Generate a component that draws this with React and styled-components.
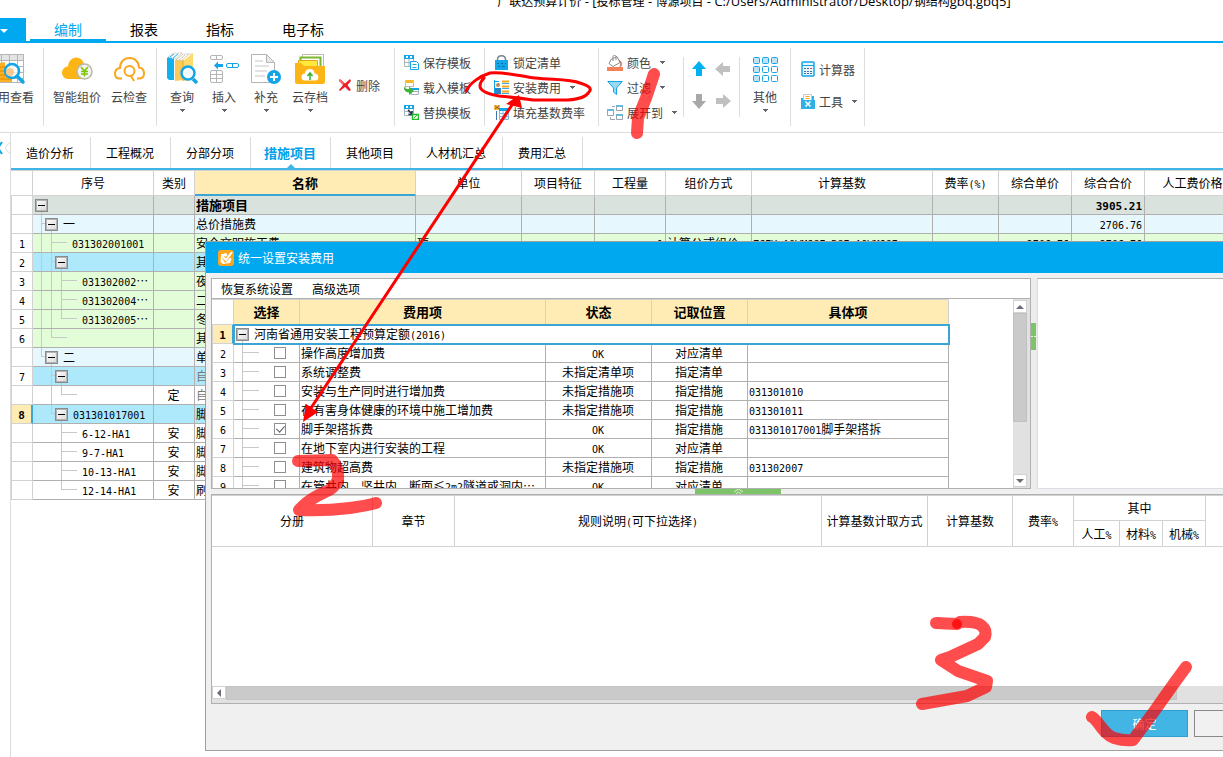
import React, { Component } from "react";
import styled, { createGlobalStyle, css } from "styled-components";

const GlobalStyle = createGlobalStyle`
  * {
    box-sizing: border-box;
  }

  body {
    margin: 0;
    background: #fff;
    color: #000;
    font-family: "Noto Sans CJK SC", sans-serif;
    font-size: 12px;
  }

  button {
    margin: 0;
    padding: 0;
    border: 0;
    background: none;
    color: inherit;
    font: inherit;
  }

  svg {
    display: block;
    flex: none;
  }
`;

const Window = styled.div`
  position: relative;
  display: flex;
  flex-direction: column;
  min-height: 100vh;
  overflow: hidden;
`;

const TitleBar = styled.div`
  height: 18px;
  padding-left: 285px;
  line-height: 2px;
  text-align: center;
  white-space: nowrap;
`;

const TitleLatin = styled.span`
  font-family: "Open Sans", sans-serif;
  font-size: 13px;
`;

const MenuTabs = styled.div`
  display: flex;
  height: 25px;
  border-bottom: 2px solid #00a8f0;
`;

const AppButton = styled.button`
  width: 26px;
  height: 25px;
  margin-right: 4px;
  background: #00a8f0;
`;

const MenuTab = styled.button`
  height: 23px;
  padding: 0 24px;
  font-size: 14px;
  line-height: 20px;
  color: ${props => (props.$active ? "#00a8f0" : "#000")};
  border-bottom: 2px solid ${props => (props.$active ? "#00a8f0" : "transparent")};
`;

const Ribbon = styled.div`
  display: flex;
  height: 90px;
  border-bottom: 1px solid #dcdcdc;
  color: #444;
  white-space: nowrap;
`;

const Divider = styled.div`
  flex: none;
  width: 1px;
  margin: ${props => (props.$short ? "14px 0 15px" : "5px 0 6px")};
  background: #dedede;
`;

const Group = styled.div`
  display: flex;
  flex: none;
  gap: 10px;
  padding: 0 9px;
`;

const EdgeGroup = styled(Group)`
  width: 43px;
  justify-content: flex-end;
`;

const BigButton = styled.button`
  display: flex;
  flex: none;
  flex-direction: column;
  align-items: center;
  min-width: 32px;
  padding-top: 9px;
  line-height: 22px;

  span + svg {
    margin-top: 1px;
  }
`;

const SmallColumn = styled.div`
  display: flex;
  flex: none;
  flex-direction: column;
  padding: 7px 13px 0 9px;
`;

const ViewColumn = styled(SmallColumn)`
  padding: 7px 6px 0 8px;
`;

const ToolColumn = styled(SmallColumn)`
  padding: 10px 7px 0 10px;
`;

const SmallButton = styled.button`
  display: flex;
  align-items: center;
  gap: 4px;
  height: ${props => (props.$tall ? "32px" : "25px")};

  svg + span + svg {
    margin-left: 5px;
  }
`;

const DeleteButton = styled(SmallButton)`
  height: 84px;
  padding-right: 5px;
`;

const Arrows = styled.div`
  display: grid;
  grid-template-columns: 24px 24px;
  grid-template-rows: 32px 32px;
  padding: 10px 0 0 7px;

  button {
    display: flex;
    align-items: center;
  }
`;

const Workspace = styled.div`
  display: flex;
  flex: 1;
`;

const SideStrip = styled.div`
  flex: none;
  width: 11px;
  padding-top: 7px;
  border-right: 1px solid #dcdcdc;
`;

const Sheet = styled.div`
  flex: 1;
  min-width: 0;
  overflow: hidden;
`;

const SheetTabs = styled.div`
  display: flex;
  height: 37px;
  padding-top: 4px;
  border-bottom: 2px solid #40b4e5;
`;

const SheetTab = styled.button`
  position: relative;
  flex: none;
  padding: 0 16px 0 15px;
  border-right: 1px solid #dcdcdc;

  ${props =>
    props.$active &&
    css`
      padding: 0 14px 0 13px;
      color: #00a0e9;
      font-size: 13px;
      font-weight: bold;

      &::after {
        content: "";
        position: absolute;
        bottom: 0;
        left: 50%;
        margin-left: -4px;
        border: 4px solid transparent;
        border-top: 0;
        border-bottom-color: #40b4e5;
      }
    `};
`;

const Latin = styled.span`
  font-family: "DejaVu Sans Mono", monospace;
  font-size: ${props => (props.$large ? "11px" : "10px")};
  line-height: 1;
`;

const Table = styled.table`
  width: ${props => props.$width || "100%"};
  min-width: ${props => props.$min || "0"};
  table-layout: fixed;
  border-collapse: separate;
  border-spacing: 0;
  border-top: 1px solid #d2d2d2;
`;

const Head = styled.th`
  height: ${props => props.$height || "25px"};
  padding: 0;
  overflow: hidden;
  border-right: 1px solid #d2d2d2;
  border-bottom: 1px solid #d2d2d2;
  background: ${props => (props.$yellow ? "#ffebb4" : "#fff")};
  font-size: ${props => (props.$bold ? "13px" : "12px")};
  font-weight: ${props => (props.$bold ? "bold" : "normal")};
  line-height: 18px;
  white-space: nowrap;

  ${props => props.$current && "border-bottom: 2px solid #3ba6d6;"};
`;

const ROW_COLORS = {
  total: "#dae2dd",
  section: "#e6f7fd",
  item: "#e3fdd9",
  group: "#aee9fb",
  plain: "#fff"
};

const Cell = styled.td`
  height: 19px;
  padding: 0 2px 0 1px;
  overflow: hidden;
  border-right: 1px solid #b0b0b0;
  border-bottom: 1px solid #b0b0b0;
  background: ${props => ROW_COLORS[props.$kind || "plain"]};
  color: ${props => (props.$muted ? "#777" : "#000")};
  font-size: ${props => (props.$bold ? "13px" : "12px")};
  font-weight: ${props => (props.$bold ? "bold" : "normal")};
  line-height: 18px;
  text-align: ${props => props.$align || "left"};
  white-space: nowrap;
`;

const NumberCell = styled(Cell)`
  padding: 0;
  border-color: #d2d2d2;
  border-left: 1px solid #d2d2d2;
  text-align: center;
  background: ${props => (props.$current ? "#ffebb4" : "#fff")};
  font-weight: ${props => (props.$current ? "bold" : "normal")};

  ${props => props.$current && "border-right: 2px solid #3ba6d6;"};
`;

const OutlinedCell = styled(Cell)`
  outline: 2px solid #3ba6d6;
  outline-offset: -1px;
`;

const Tree = styled.div`
  display: flex;
  align-items: center;
  height: 18px;
  margin-left: -1px;
`;

const TreeText = styled.span`
  padding-left: 5px;
`;

const Toggle = styled.button`
  position: relative;
  flex: none;
  width: 13px;
  height: 13px;
  border: 1px solid #8a8a8a;
  box-shadow: inset 0 0 0 1px #b4b4b4;
  background: linear-gradient(135deg, #fff, #d8d8d8);

  &::before {
    content: "";
    position: absolute;
    top: 5px;
    left: 2px;
    width: 7px;
    height: 1px;
    background: #000;
  }

  &::after {
    content: "";
    position: absolute;
    top: 12px;
    left: 5px;
    width: 1px;
    height: 3px;
    background: #c8c8c8;
  }
`;

const Check = styled.input`
  flex: none;
  appearance: none;
  width: 12px;
  height: 12px;
  margin: 0;
  border: 1px solid #8e8e8e;
  background: #fff;

  &:checked::after {
    content: "";
    display: block;
    width: 4px;
    height: 7px;
    margin: 0 0 0 3px;
    border: solid #555b66;
    border-width: 0 1px 1px 0;
    transform: rotate(42deg);
  }
`;

const Dialog = styled.section`
  position: absolute;
  top: 241px;
  left: 205px;
  right: -64px;
  border: 1px solid #a0a0a0;
  background: #f0f0f0;
`;

const DialogTitle = styled.header`
  display: flex;
  align-items: center;
  gap: 4px;
  height: 31px;
  padding-left: 12px;
  background: #00a8f0;
  color: #fff;
`;

const DialogBody = styled.div`
  padding: 5px 5px 0;
`;

const Upper = styled.div`
  display: flex;
  height: 211px;
`;

const FeePanel = styled.div`
  display: flex;
  flex: 0 0 820px;
  flex-direction: column;
  border: 1px solid #b0b0b0;
  background: #fff;
`;

const FeeMenu = styled.div`
  display: flex;
  flex: none;
  gap: 19px;
  height: 20px;
  padding-left: 9px;
  border-bottom: 1px solid #b0b0b0;
`;

const FeeScroll = styled.div`
  display: flex;
  justify-content: space-between;
  flex: 1;
  overflow: hidden;
`;

const PreviewPanel = styled.div`
  flex: 1;
  border: 1px solid #b0b0b0;
  border-left-color: #dcdce4;
  border-bottom-color: #dcdce4;
  background: #fff;
`;

const SideSplitter = styled.div`
  flex: none;
  width: 6px;
  padding-top: 45px;
  background: #ececec;
`;

const SideGrip = styled.button`
  display: flex;
  align-items: center;
  width: 5px;
  height: 27px;
  background: #7dc468;
`;

const Splitter = styled.div`
  height: 5px;
  padding-left: 484px;
`;

const Grip = styled.button`
  display: flex;
  justify-content: center;
  width: 86px;
  height: 5px;
  background: #7dc468;
`;

const VScroll = styled.div`
  flex: none;
  width: 17px;
  padding: 1px 3px 1px 0;
  display: flex;
  flex-direction: column;
  background: #e1e1e1;
`;

const ScrollButton = styled.button`
  display: flex;
  flex: none;
  align-items: center;
  justify-content: center;
  width: 14px;
  height: 13px;
  border: 1px solid #d2d2d2;
  background: #fff;
`;

const VThumb = styled.div`
  height: 109px;
  margin-bottom: auto;
  border: 1px solid #c0c0c0;
  background: #cacaca;
`;

const RulePanel = styled.div`
  display: flex;
  flex-direction: column;
  height: 210px;
  border: 1px solid #b0b0b0;
  background: #fff;
`;

const HScroll = styled.div`
  display: flex;
  height: 17px;
  margin-top: auto;
  padding-bottom: 3px;
  background: #e1e1e1;
`;

const HThumb = styled.div`
  width: 89%;
  border: 1px solid #c4c4c4;
  background: #cacaca;
`;

const Footer = styled.footer`
  display: flex;
  justify-content: flex-end;
  gap: 6px;
  height: 46px;
  padding: 6px 5px 0;
`;

const DialogButton = styled.button`
  width: 87px;
  height: 27px;
  border: 1px solid ${props => (props.$primary ? "#2f9fd0" : "#8a8a8a")};
  background: ${props => (props.$primary ? "#43b5e4" : "#f1f1f1")};
  color: ${props => (props.$primary ? "#fff" : "#000")};
`;

const Marks = styled.svg`
  position: absolute;
  top: 0;
  left: 0;
  pointer-events: none;
`;

// Latin runs are set in a half-width face next to the full-width characters
const Mixed = ({ children, large, as: Run = Latin }) =>
  String(children || "")
    .split(/([\x20-\x7e]+)/)
    .map((part, i) =>
      i % 2 ? (
        <Run key={i} $large={large}>
          {part}
        </Run>
      ) : (
        part
      )
    );

const Caret = ({ color = "#5f6470" }) => (
  <svg width="5" height="3" viewBox="0 0 5 3">
    <path d="M0 0h5v1H4v1H3v1H2V2H1V1H0z" fill={color} />
  </svg>
);

const Svg = ({ w = 32, h = 34, children }) => (
  <svg width={w} height={h} viewBox={`0 0 ${w} ${h}`} fill="none">
    {children}
  </svg>
);

const CostViewIcon = () => (
  <Svg>
    <path d="M0 2.500h29.500v28H0z" fill="#fff" stroke="#b5b5b5" />
    <path d="M0 3h29v5H0z" fill="#e4e4e4" />
    <path d="M0 8.500h29M0 14.500h29M0 20.500h29M0 26.500h29M7.500 3v27M15.500 3v27M23.500 3v27" stroke="#b5b5b5" />
    <path d="M0 12l11-2v20H0zM11 18h7v12h-7z" fill="#fdb022" />
    <path d="M0 15h11M0 19h11M0 23h18M0 27h18" stroke="#e08a00" />
    <circle cx="18" cy="19" r="7" fill="#fff" fillOpacity=".7" stroke="#12a5e8" strokeWidth="2.500" />
    <circle cx="16" cy="20" r="4" fill="#fbc98c" />
    <path d="M23 24l6 6" stroke="#12a5e8" strokeWidth="3.500" strokeLinecap="round" />
  </Svg>
);

const CloudPriceIcon = () => (
  <Svg>
    <path d="M7 27a6 6 0 0 1-6-6c0-4 3-6.500 6-6.500C7.500 9 11 5.500 15 5.500c5 0 8 4 8.500 8.500V27z" fill="#fdb515" />
    <circle cx="23.500" cy="19.500" r="7.500" fill="#f4f4f0" stroke="#b8b8a8" strokeWidth="1.500" />
    <path d="M20 15l3.500 4 3.500-4M20 19.500h7M20 22h7M23.500 19v5.500" stroke="#7ac800" strokeWidth="1.500" />
  </Svg>
);

const CloudCheckIcon = () => (
  <Svg>
    <path d="M9 26.500H6.500C3 26.500 2 24 2 21.500c0-3 2-5 5-5.500 0-6 4-10 9.500-10S26 10 26 15.500c3 .5 5 3 5 6s-2 5-5 5h-2" stroke="#fba61c" strokeWidth="2" />
    <circle cx="16.500" cy="19" r="5" stroke="#fba61c" strokeWidth="2" />
    <path d="M18 24l3 5" stroke="#fba61c" strokeWidth="2" />
  </Svg>
);

const BooksIcon = () => (
  <Svg>
    <path d="M1 6l7-5h6L8 7v21H3l-2-2z" fill="#12b0ec" />
    <path d="M2 5l5-4h9l-7 6z" fill="#fff" stroke="#bbb" strokeWidth=".6" />
    <path d="M4 5l4-3M7 6l5-4" stroke="#12b0ec" />
    <path d="M8 7h2v21H8z" fill="#fff" />
    <path d="M9 8l8-6v26l-8 1z" fill="#fdc95a" />
    <path d="M10 8l7-6h10l-9 7z" fill="#fff" stroke="#bbb" strokeWidth=".6" />
    <path d="M13 8l6-5M16 8l7-6" stroke="#d8c9a0" />
    <path d="M17 9l10-8v27l-10 1z" fill="#fddb6c" />
    <path d="M17 8v21" stroke="#eea91f" />
    <circle cx="22" cy="21" r="6.500" fill="#f4fbff" stroke="#12a5e8" strokeWidth="2.500" />
    <path d="M27 27l4 4" stroke="#12a5e8" strokeWidth="3.500" />
  </Svg>
);

const InsertIcon = () => (
  <Svg>
    <rect x="2.500" y="3.500" width="12" height="4" rx="1.500" stroke="#b5b5b5" />
    <path d="M8.500 3v5" stroke="#b5b5b5" />
    <path d="M6 13.500l4-4V12h5v3h-5v2.500z" fill="#12a5e8" />
    <rect x="18.500" y="11.500" width="12" height="4" rx="1.500" stroke="#12a5e8" />
    <path d="M24.500 11v5" stroke="#12a5e8" />
    <rect x="2.500" y="18.500" width="12" height="12" rx="1.500" stroke="#b5b5b5" />
    <path d="M8.500 18v13M2 22.500h12M2 26.500h12" stroke="#b5b5b5" />
  </Svg>
);

const SupplementIcon = () => (
  <Svg>
    <path d="M1.500 2.500h15l8 8v20h-23z" fill="#fff" stroke="#b5b5b5" />
    <path d="M16.500 2.500v8h8z" fill="#e8e8e8" stroke="#b5b5b5" />
    <path d="M5 9h8M5 14h14M5 19h12M5 24h10" stroke="#e2e2e2" strokeWidth="2" />
    <circle cx="24" cy="25" r="7" fill="#12a5e8" />
    <path d="M24 21v8M20 25h8" stroke="#fff" strokeWidth="2" />
  </Svg>
);

const ArchiveIcon = () => (
  <Svg>
    <path d="M8.500 2.500h21v14h-21z" fill="#fff" stroke="#c5bba5" />
    <path d="M6.500 5.500h20v12h-20z" fill="#fff" stroke="#7cb82f" strokeWidth="2" />
    <path d="M4.500 8.500h19v10h-19z" fill="#ffe93c" stroke="#e8a21c" />
    <path d="M1 11h6l3 3h21v16a2 2 0 0 1-2 2H3a2 2 0 0 1-2-2z" fill="#fdb515" />
    <path d="M11 28.500a3.500 3.500 0 0 1 0-7c0-3 2-4.500 5-4.500s4.500 2 4.500 4.500c5 0 5 7 1 7z" fill="#fff" />
    <path d="M16 28v-6M13.500 24l2.500-3 2.500 3" stroke="#3bb32d" strokeWidth="1.500" />
  </Svg>
);

const OthersIcon = () => (
  <Svg>
    {[5, 14, 23].map((y, r) =>
      [4, 13, 22].map((x, c) => (
        <rect
          key={x}
          x={x + 0.5}
          y={y + 0.5}
          width="6"
          height="6"
          rx="1"
          fill={r === 0 || c === 0 ? "#bfe2f4" : "#fff"}
          stroke="#12a5e8"
        />
      ))
    )}
  </Svg>
);

const DeleteIcon = () => (
  <Svg w={14} h={14}>
    <path d="M2 1l5 4.500L12 1l1 2-3.500 4L13 12l-2 1-4-4-5 4-1-1 4-5-4-4.500z" fill="#e8202a" />
    <path d="M2 1l4 4-1 2-4-4z" fill="#f76a6a" />
  </Svg>
);

const SaveTemplateIcon = () => (
  <Svg w={15} h={15}>
    <path d="M.5 1.500h9v10h-9zM.5 7.500h9M5 1v11" fill="#fff" stroke="#a9b4ba" />
    <path d="M0 0h10v4H0z" fill="#12a5e8" />
    <path d="M2 1h2v2H2zM6 1h2v2H6z" fill="#fff" />
    <path d="M6.500 6.500h6l2 2v6h-8z" fill="#fff" stroke="#12a5e8" />
    <path d="M8.500 9.500h4M8.500 12.500h4" stroke="#12a5e8" />
  </Svg>
);

const LoadTemplateIcon = () => (
  <Svg w={15} h={15}>
    <rect x="1" y="0" width="9" height="3" rx="1" fill="#f8b830" />
    <path d="M1.500 3v5M9.500 3v4M1 6.500h9" stroke="#bbb" />
    <path d="M7 8.500h7.500v6H7zM7 11.500h7" fill="#fff" stroke="#a9b4ba" />
    <path d="M7 8h8v2H7z" fill="#12a5e8" />
    <path d="M0 6c1 3 3 3 5 3V6.500l5 4.500-5 4v-2.500C2 12.500-1 10 0 6z" fill="#3eb23a" />
  </Svg>
);

const ReplaceTemplateIcon = () => (
  <Svg w={15} h={15}>
    <path d="M.5 1.500h9v9h-9zM.5 6.500h9M5 1v10" fill="#fff" stroke="#a9b4ba" />
    <path d="M0 0h10v4H0z" fill="#12a5e8" />
    <path d="M2 1h2v2H2zM6 1h2v2H6z" fill="#fff" />
    <path d="M4 5l4 4M8 6v3.500H4.500" stroke="#17344c" strokeWidth="1.500" />
    <path d="M8.500 9.500h6v5h-6z" fill="#fff" stroke="#21bb29" strokeWidth="1.500" />
    <path d="M10 13l3-3" stroke="#21bb29" />
  </Svg>
);

const LockIcon = () => (
  <Svg w={15} h={15}>
    <path d="M3.500 7V4.500C3.500-.5 11.500-.5 11.500 4.500V7" stroke="#7b838b" strokeWidth="1.500" />
    <rect x="1" y="5" width="13" height="10" fill="#12a5e8" />
    <path d="M3 8.500h2M7 8.500h2M11 8.500h1M4 11.500h2M8 11.500h3" stroke="#0b6ea8" />
  </Svg>
);

const InstallCostIcon = () => (
  <Svg w={15} h={15}>
    <path d="M.5 0v15M0 1.500h5M0 13.500h5" stroke="#12a5e8" />
    <circle cx="4" cy="5" r="2" fill="#b98a55" />
    <path d="M1 8h6v6H1z" fill="#2a83cc" />
    <path d="M8 1.500h7M8 6.500h7M8 11.500h7" stroke="#f5a623" strokeWidth="2" />
    <path d="M8 3.500h7M8 8.500h7M8 13.500h7" stroke="#45a8dc" />
  </Svg>
);

const FillRateIcon = () => (
  <Svg w={15} h={15}>
    <rect x="0" y="0" width="6" height="5" fill="#f5b94a" />
    <path d="M1 1l4 3M5 1L1 4" stroke="#8f5d10" />
    <path d="M2.500 6v9" stroke="#4575a8" />
    <path d="M5.500 3.500h9v11h-9zM5.500 8.500h9M5.500 11.500h9M9 5v10M12 5v10" fill="#fff" stroke="#7fb9de" />
    <path d="M5 3h10v3H5z" fill="#12a5e8" />
  </Svg>
);

const ColorIcon = () => (
  <Svg w={16} h={16}>
    <path d="M0 12h16v4H0z" fill="#f58158" />
    <path d="M4 4.500l6-3 3 6-7 4-4-3z" fill="#fff" stroke="#8b8b8b" />
    <path d="M6 6V1.500C6 0 9 0 9 1.500V5" stroke="#8b8b8b" />
    <path d="M12 5c2 1 2 4 1 7 2-1 2.500-5-1-7z" fill="#f58158" stroke="#a8674a" strokeWidth=".6" />
  </Svg>
);

const FilterIcon = () => (
  <Svg w={16} h={16}>
    <path d="M.8 1.500h14.400L9.500 8v6.500L6.500 12V8z" fill="#9bd8f4" stroke="#12a5e8" />
  </Svg>
);

const ExpandIcon = () => (
  <Svg w={16} h={16}>
    <path d="M.5 4.500h6v6h-6zM9.500.5h6v5h-6zM9.500 9.500h6v5h-6z" fill="#fff" stroke="#9aa3a8" />
    <path d="M0 4h7v2H0zM9 0h7v2H9zM9 9h7v2H9z" fill="#68b8dc" />
    <path d="M3.500 12v2.500H8M5 1.500h3" stroke="#9aa3a8" />
  </Svg>
);

const CalculatorIcon = () => (
  <Svg w={14} h={16}>
    <rect x="1" y="1" width="12" height="14" rx="1" fill="#eaf6fc" stroke="#12a5e8" strokeWidth="1.500" />
    <path d="M1 4.500h12" stroke="#12a5e8" />
    <path d="M3 7.500h5M3 10.500h8M3 12.500h8" stroke="#3a6fae" strokeDasharray="2 1" />
    <path d="M9 7.500h2" stroke="#f05a28" />
  </Svg>
);

const ToolIcon = () => (
  <Svg w={14} h={16}>
    <path d="M2.500 1.500h8v6h-8z" fill="#fff" stroke="#c9c9c9" />
    <path d="M4.500 3.500h4M4.500 5.500h4" stroke="#f5a623" />
    <path d="M0 5h2v2h9V3h2v4h1v9H0z" fill="#2fb1e8" />
    <path d="M4.500 8.500l5 5M9.500 8.500l-5 5" stroke="#fff" strokeWidth="1.500" />
  </Svg>
);

const ArrowIcon = ({ color, turn }) => (
  <svg width="16" height="16" viewBox="0 0 16 16">
    <path d="M8 0l7 8h-4v7H5V8H1z" fill={color} transform={`rotate(${turn} 8 8)`} />
  </svg>
);

const DialogIcon = () => (
  <Svg w={16} h={16}>
    <rect width="16" height="16" rx="3" fill="#fba61c" />
    <path d="M8 3L3 4.500 2.500 12 5 14l7-1 1.500-4" fill="#fff" />
    <path d="M5.500 7l2 3 6-7" stroke="#fba61c" strokeWidth="3.500" />
    <path d="M5 7l3 3 6-8" stroke="#fff" strokeWidth="2" />
  </Svg>
);

const ScrollArrow = ({ turn = 0 }) => (
  <svg width="8" height="8" viewBox="0 0 8 8">
    <path d="M4 2l4 4H0z" fill="#6a6c78" transform={`rotate(${turn} 4 4)`} />
  </svg>
);

// bars: full height lines, stop: line that ends at this row, tick: where the branch runs to
const Branch = ({ width, bars = [], stop, tick }) => (
  <svg width={width} height="18" viewBox={`0 0 ${width} 18`} stroke="#c8c8c8">
    {bars.map(x => (
      <path key={x} d={`M${x + 0.5} 0v18`} />
    ))}
    {stop !== undefined && <path d={`M${stop + 0.5} 0v9`} />}
    {tick && <path d={`M${tick[0]} 8.500H${tick[1]}`} />}
  </svg>
);

const SHEET_COLUMNS = [
  [22, ""],
  [121, "序号"],
  [41, "类别"],
  [221, "名称"],
  [106, "单位"],
  [73, "项目特征"],
  [71, "工程量"],
  [86, "组价方式"],
  [181, "计算基数"],
  [66, "费率(%)"],
  [73, "综合单价"],
  [73, "综合合价"],
  [null, "人工费价格"]
];

const leaf = { width: 44, bars: [28], tick: [28, 44] };

const SHEET_ROWS = [
  { kind: "total", tree: { width: 2 }, toggle: true, name: "措施项目", total: "3905.21", bold: true },
  { kind: "section", tree: { width: 12, bars: [8], tick: [8, 12] }, toggle: true, code: "一", name: "总价措施费", total: "2706.76" },
  {
    no: 1,
    kind: "item",
    tree: { width: 34, bars: [8, 18], tick: [18, 34] },
    code: "031302001001",
    name: "安全文明施工费",
    unit: "项",
    qty: "1",
    mode: "计算公式组价",
    base: "ZCFY_AQWMSGF+RGF_AQWMSGF",
    price: "2706.76",
    total: "2706.76"
  },
  { no: 2, kind: "group", tree: { width: 22, bars: [8, 18], tick: [18, 22] }, toggle: true, name: "其" },
  { no: 3, kind: "item", tree: { ...leaf, bars: [8, 18, 28] }, code: "031302002…", name: "夜" },
  { no: 4, kind: "item", tree: { ...leaf, bars: [8, 18, 28] }, code: "031302004…", name: "二" },
  { no: 5, kind: "item", tree: { ...leaf, bars: [8, 18], stop: 28 }, code: "031302005…", name: "冬" },
  { no: 6, kind: "item", tree: { width: 34, bars: [8], stop: 18, tick: [18, 34] }, name: "其" },
  { kind: "section", tree: { width: 12, stop: 8, tick: [8, 12] }, toggle: true, code: "二", name: "单" },
  { no: 7, kind: "group", tree: { width: 22, bars: [18], tick: [18, 22] }, toggle: true, name: "自", muted: true },
  { tree: { width: 44, bars: [18], stop: 28, tick: [28, 44] }, type: "定", name: "自", muted: true },
  { no: 8, kind: "group", tree: { width: 22, stop: 18, tick: [18, 22] }, toggle: true, code: "031301017001", name: "脚", current: true },
  { tree: leaf, code: "6-12-HA1", type: "安", name: "脚" },
  { tree: leaf, code: "9-7-HA1", type: "安", name: "脚" },
  { tree: leaf, code: "10-13-HA1", type: "安", name: "脚" },
  { tree: { ...leaf, bars: [], stop: 28 }, code: "12-14-HA1", type: "安", name: "刷" }
];

const FEE_COLUMNS = [
  [22, ""],
  [66, "选择"],
  [246, "费用项"],
  [106, "状态"],
  [96, "记取位置"],
  [201, "具体项"]
];

const FEE_ROWS = [
  ["操作高度增加费", "OK", "对应清单", ""],
  ["系统调整费", "未指定清单项", "指定清单", ""],
  ["安装与生产同时进行增加费", "未指定措施项", "指定措施", "031301010"],
  ["在有害身体健康的环境中施工增加费", "未指定措施项", "指定措施", "031301011"],
  ["脚手架搭拆费", "OK", "指定措施", "031301017001脚手架搭拆"],
  ["在地下室内进行安装的工程", "OK", "对应清单", ""],
  ["建筑物超高费", "未指定措施项", "指定措施", "031302007"],
  ["在管井内，竖井内，断面≤2m2隧道或洞内…", "OK", "对应清单", ""]
];

const Cols = ({ widths }) => (
  <colgroup>
    {widths.map((width, i) => (
      <col key={i} style={width ? { width } : undefined} />
    ))}
  </colgroup>
);

const BigTool = ({ icon: Icon, label, menu }) => (
  <BigButton type="button">
    <Icon />
    <span>{label}</span>
    {menu ? <Caret /> : null}
  </BigButton>
);

const SmallTool = ({ icon: Icon, label, menu, tall }) => (
  <SmallButton type="button" $tall={tall}>
    <Icon />
    <span>{label}</span>
    {menu ? <Caret /> : null}
  </SmallButton>
);

const SheetRow = ({ row }) => {
  const { kind, bold } = row;
  return (
    <tr>
      <NumberCell $current={row.current}>
        <Mixed large={row.current}>{row.no}</Mixed>
      </NumberCell>
      <Cell $kind={kind}>
        <Tree>
          <Branch {...row.tree} />
          {row.toggle ? <Toggle type="button" aria-label="折叠" /> : null}
          <TreeText>
            <Mixed>{row.code}</Mixed>
          </TreeText>
        </Tree>
      </Cell>
      <Cell $kind={kind} $align="center">{row.type}</Cell>
      <Cell $kind={kind} $bold={bold} $muted={row.muted}>{row.name}</Cell>
      <Cell $kind={kind}>{row.unit}</Cell>
      <Cell $kind={kind} />
      <Cell $kind={kind} $align="right"><Mixed>{row.qty}</Mixed></Cell>
      <Cell $kind={kind}>{row.mode}</Cell>
      <Cell $kind={kind}><Mixed>{row.base}</Mixed></Cell>
      <Cell $kind={kind} />
      <Cell $kind={kind} $align="right"><Mixed>{row.price}</Mixed></Cell>
      <Cell $kind={kind} $align="right" $bold={bold}>
        <Mixed large={bold}>{row.total}</Mixed>
      </Cell>
      <Cell $kind={kind} />
    </tr>
  );
};

class FeeTable extends Component {
  constructor() {
    super();

    this.state = {
      checked: { 6: true }
    };
  }

  toggle(no) {
    const { checked } = this.state;
    this.setState({ checked: { ...checked, [no]: !checked[no] } });
  }

  render() {
    return (
      <Table $width="737px">
        <Cols widths={FEE_COLUMNS.map(column => column[0])} />
        <thead>
          <tr>
            {FEE_COLUMNS.map(([width, label]) => (
              <Head key={width} $yellow={label !== ""} $bold>{label}</Head>
            ))}
          </tr>
        </thead>
        <tbody>
          <tr>
            <NumberCell $current><Mixed large>1</Mixed></NumberCell>
            <OutlinedCell colSpan="5">
              <Tree>
                <Branch width={2} />
                <Toggle type="button" aria-label="折叠" />
                <TreeText><Mixed>河南省通用安装工程预算定额(2016)</Mixed></TreeText>
              </Tree>
            </OutlinedCell>
          </tr>
          {FEE_ROWS.map(([name, status, place, detail], i) => {
            const no = i + 2;
            return (
              <tr key={no}>
                <NumberCell><Mixed>{no}</Mixed></NumberCell>
                <Cell>
                  <Tree>
                    <Branch width={40} bars={[8]} tick={[8, 25]} />
                    <Check
                      type="checkbox"
                      aria-label={name}
                      checked={Boolean(this.state.checked[no])}
                      onChange={() => this.toggle(no)}
                    />
                  </Tree>
                </Cell>
                <Cell><Mixed>{name}</Mixed></Cell>
                <Cell $align="center"><Mixed>{status}</Mixed></Cell>
                <Cell $align="center">{place}</Cell>
                <Cell><Mixed>{detail}</Mixed></Cell>
              </tr>
            );
          })}
        </tbody>
      </Table>
    );
  }
}

const RuleTable = () => (
  <Table>
    <Cols widths={[161, 82, 367, 106, 85, 61, 46, 43, 43, null]} />
    <thead>
      <tr>
        {["分册", "章节", "规则说明(可下拉选择)", "计算基数计取方式", "计算基数", "费率%"].map(label => (
          <Head key={label} rowSpan="2"><Mixed>{label}</Mixed></Head>
        ))}
        <Head colSpan="3">其中</Head>
        <Head rowSpan="2" />
      </tr>
      <tr>
        {["人工%", "材料%", "机械%"].map(label => (
          <Head key={label} $height="26px"><Mixed>{label}</Mixed></Head>
        ))}
      </tr>
    </thead>
  </Table>
);

const FeeDialog = () => (
  <Dialog role="dialog" aria-labelledby="fee-title">
    <DialogTitle>
      <DialogIcon />
      <span id="fee-title">统一设置安装费用</span>
    </DialogTitle>
    <DialogBody>
      <Upper>
        <FeePanel>
          <FeeMenu>
            <button type="button">恢复系统设置</button>
            <button type="button">高级选项</button>
          </FeeMenu>
          <FeeScroll>
            <FeeTable />
            <VScroll>
              <ScrollButton type="button" aria-label="向上"><ScrollArrow /></ScrollButton>
              <VThumb />
              <ScrollButton type="button" aria-label="向下"><ScrollArrow turn={180} /></ScrollButton>
            </VScroll>
          </FeeScroll>
        </FeePanel>
        <SideSplitter>
          <SideGrip type="button" aria-label="收起右侧">
            <svg width="5" height="5" viewBox="0 0 5 5" fill="none" stroke="#e4f6dc">
              <path d="M0 3l1-1 1 1M3 3l1-1 1 1" />
            </svg>
          </SideGrip>
        </SideSplitter>
        <PreviewPanel />
      </Upper>
      <Splitter>
        <Grip type="button" aria-label="收起下方">
          <svg width="9" height="5" viewBox="0 0 9 5" fill="none" stroke="#e4f6dc">
            <path d="M0 3l4.500-3L9 3M2 5l2.500-2L7 5" />
          </svg>
        </Grip>
      </Splitter>
      <RulePanel>
        <RuleTable />
        <HScroll>
          <ScrollButton type="button" aria-label="向左"><ScrollArrow turn={-90} /></ScrollButton>
          <HThumb />
        </HScroll>
      </RulePanel>
    </DialogBody>
    <Footer>
      <DialogButton type="button" $primary>确定</DialogButton>
      <DialogButton type="button">取消</DialogButton>
    </Footer>
  </Dialog>
);

const PenMarks = () => (
  <Marks width="1223" height="757" viewBox="0 0 1223 757" fill="none" aria-hidden="true">
    <g stroke="#f00" strokeWidth="3" strokeLinecap="round" strokeLinejoin="round">
      <path d="M466 91C470 83 480 76 490 73C500 71 520 76 535 78C552 80 570 79 580 83C590 86 592 89 589 92C586 97 580 99 568 100L533 100C520 98 510 97 499 96C488 94 480 91 480 86C480 82 482 80 484 78" />
      <path d="M309 411L514 102" />
    </g>
    <path d="M519 95l-13 9 16 4zM303 422l3-18 12 8z" fill="#f00" />
    <g stroke="#f00" strokeOpacity=".7" strokeWidth="12" strokeLinecap="round" strokeLinejoin="round">
      <path d="M654 74L646 98L638 118L637 133" />
      <path d="M298 461L332 460Q339 468 338 479Q335 488 325 492Q310 499 303 506L299 510Q325 511 350 508Q365 506 376 503" />
      <path d="M936 623L957 624L960 622Q976 621 982 626Q987 630 985 637L978 644L950 657L941 660L958 671L987 681L986 687L967 696L922 704" />
      <path d="M1092 717C1098 720 1104 735 1114 738Q1124 741 1133 740L1153 713L1175 682L1186 667" />
    </g>
    <circle cx="957" cy="624" r="5" fill="#f00" fillOpacity=".75" />
  </Marks>
);

const App = () => (
  <Window>
    <GlobalStyle />
    <TitleBar>
      <Mixed as={TitleLatin}>广联达预算计价 - [投标管理 - 博源项目 - C:/Users/Administrator/Desktop/钢结构gbq.gbq5]</Mixed>
    </TitleBar>
    <MenuTabs>
      <AppButton type="button" aria-label="菜单">
        <Svg w={8} h={4}>
          <path d="M0 0h8L4 4z" fill="#fff" />
        </Svg>
      </AppButton>
      <MenuTab type="button" $active>编制</MenuTab>
      <MenuTab type="button">报表</MenuTab>
      <MenuTab type="button">指标</MenuTab>
      <MenuTab type="button">电子标</MenuTab>
    </MenuTabs>
    <Ribbon>
      <EdgeGroup>
        <BigTool icon={CostViewIcon} label="费用查看" />
      </EdgeGroup>
      <Divider />
      <Group>
        <BigTool icon={CloudPriceIcon} label="智能组价" />
        <BigTool icon={CloudCheckIcon} label="云检查" />
      </Group>
      <Divider />
      <Group>
        <BigTool icon={BooksIcon} label="查询" menu />
        <BigTool icon={InsertIcon} label="插入" menu />
        <BigTool icon={SupplementIcon} label="补充" menu />
        <BigTool icon={ArchiveIcon} label="云存档" menu />
        <DeleteButton type="button">
          <DeleteIcon />
          <span>删除</span>
        </DeleteButton>
      </Group>
      <Divider />
      <SmallColumn>
        <SmallTool icon={SaveTemplateIcon} label="保存模板" />
        <SmallTool icon={LoadTemplateIcon} label="载入模板" />
        <SmallTool icon={ReplaceTemplateIcon} label="替换模板" />
      </SmallColumn>
      <Divider />
      <SmallColumn>
        <SmallTool icon={LockIcon} label="锁定清单" />
        <SmallTool icon={InstallCostIcon} label="安装费用" menu />
        <SmallTool icon={FillRateIcon} label="填充基数费率" />
      </SmallColumn>
      <Divider />
      <ViewColumn>
        <SmallTool icon={ColorIcon} label="颜色" menu />
        <SmallTool icon={FilterIcon} label="过滤" menu />
        <SmallTool icon={ExpandIcon} label="展开到" menu />
      </ViewColumn>
      <Divider $short />
      <Arrows>
        <button type="button" aria-label="上移"><ArrowIcon color="#00b0f0" turn={0} /></button>
        <button type="button" aria-label="升级"><ArrowIcon color="#c0c0c0" turn={-90} /></button>
        <button type="button" aria-label="下移"><ArrowIcon color="#a8a8a8" turn={180} /></button>
        <button type="button" aria-label="降级"><ArrowIcon color="#c0c0c0" turn={90} /></button>
      </Arrows>
      <Divider $short />
      <Group>
        <BigTool icon={OthersIcon} label="其他" menu />
      </Group>
      <Divider />
      <ToolColumn>
        <SmallTool icon={CalculatorIcon} label="计算器" tall />
        <SmallTool icon={ToolIcon} label="工具" tall menu />
      </ToolColumn>
      <Divider />
    </Ribbon>
    <Workspace>
      <SideStrip>
        <svg width="10" height="16" viewBox="0 0 10 16" fill="none">
          <path d="M2 2L-2 8L2 14" stroke="#12a5e8" strokeWidth="2" />
          <path d="M10 2L5 8L10 14" stroke="#dcdcdc" />
        </svg>
      </SideStrip>
      <Sheet>
        <SheetTabs>
          {["造价分析", "工程概况", "分部分项", "措施项目", "其他项目", "人材机汇总", "费用汇总"].map(label => (
            <SheetTab key={label} type="button" $active={label === "措施项目"}>{label}</SheetTab>
          ))}
        </SheetTabs>
        <Table $min="1230px">
          <Cols widths={SHEET_COLUMNS.map(column => column[0])} />
          <thead>
            <tr>
              {SHEET_COLUMNS.map(([, label]) => {
                const current = label === "名称";
                return (
                  <Head key={label} $yellow={current} $bold={current} $current={current}>
                    <Mixed>{label}</Mixed>
                  </Head>
                );
              })}
            </tr>
          </thead>
          <tbody>
            {SHEET_ROWS.map((row, i) => (
              <SheetRow key={i} row={row} />
            ))}
          </tbody>
        </Table>
      </Sheet>
    </Workspace>
    <FeeDialog />
    <PenMarks />
  </Window>
);

export default App;
